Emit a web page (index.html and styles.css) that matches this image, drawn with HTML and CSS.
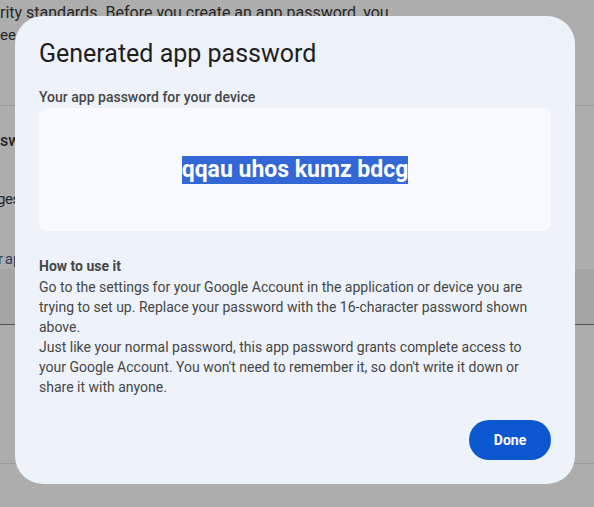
FILE: index.html
```html
<!DOCTYPE html>
<html lang="en">
<head>
<meta charset="utf-8">
<title>Generated app password</title>
<link rel="stylesheet" href="styles.css">
</head>
<body>
<div class="page">
  <div class="page-content">
    <p class="bg-line first">rity standards. Before you create an app password, you</p>
    <p class="bg-line second">ee</p>
    <div class="bg-rule top-rule"></div>
    <p class="bg-line heading">sw</p>
    <p class="bg-line third">ges</p>
    <p class="bg-line fourth">r <span class="bg-link">ap</span></p>
    <div class="bg-field"></div>
    <div class="bg-rule bottom-rule"></div>
  </div>

  <div class="dialog" role="dialog" aria-labelledby="dlg-title">
    <h1 id="dlg-title" class="dialog-title">Generated app password</h1>
    <p class="pw-label">Your app password for your device</p>
    <div class="pw-box">
      <span class="pw-value">qqau uhos kumz bdcg</span>
    </div>
    <div class="howto">
      <p class="howto-title">How to use it</p>
      <p class="howto-text">Go to the settings for your Google Account in the application or device you are trying to set up. Replace your password with the 16-character password shown above.</p>
      <p class="howto-text">Just like your normal password, this app password grants complete access to your Google Account. You won't need to remember it, so don't write it down or share it with anyone.</p>
    </div>
    <div class="actions">
      <button class="done-btn" type="button">Done</button>
    </div>
  </div>
</div>
</body>
</html>
```

FILE: styles.css
```css
* { box-sizing: border-box; }
html, body { margin: 0; padding: 0; }
body {
  width: 594px;
  height: 507px;
  overflow: hidden;
  font-family: Roboto, "Noto Sans", sans-serif;
}
.page {
  position: relative;
  width: 594px;
  height: 507px;
  background: #adadad;
  overflow: hidden;
}
.page-content {
  display: flex;
  flex-direction: column;
  color: #1a1a1a;
  font-size: 15px;
}
.bg-line { margin: 0; line-height: 22px; white-space: nowrap; }
.bg-line.first { margin-top: 2px; color: #262626; font-size: 16px; }
.bg-line.second { color: #262626; }
.bg-rule { height: 1px; background: #999; }
.top-rule { margin-top: 59px; }
.bg-line.heading { margin-top: 24px; font-weight: 500; font-size: 16px; color: #1f1f1f; }
.bg-line.third { margin-top: 36px; color: #262626; text-indent: -3px; letter-spacing: -0.5px; }
.bg-line.fourth { margin-top: 38px; color: #3a3a3a; text-indent: -2px; word-spacing: -2px; }
.bg-link { color: #2b3a5a; }
.bg-field { height: 56px; margin-top: -1px; background: #a5a5a5; border-bottom: 1px solid #555; }
.bottom-rule { margin-top: 138px; background: #9a9a9a; }

.dialog {
  position: absolute;
  left: 15px;
  top: 16px;
  width: 560px;
  height: 468px;
  background: #eef2fb;
  border-radius: 28px;
  padding: 22px 24px 24px;
  display: flex;
  flex-direction: column;
  color: #1f1f1f;
}
.dialog-title {
  margin: 0;
  font-weight: 400;
  font-size: 25px;
  line-height: 32px;
  color: #1f1f1f;
}
.pw-label {
  margin: 17px 0 0;
  font-size: 14px;
  font-weight: 500;
  line-height: 20px;
  color: #444746;
}
.pw-box {
  margin-top: 1px;
  height: 123px;
  background: #f8faff;
  border-radius: 8px;
  display: flex;
  align-items: center;
  justify-content: center;
}
.pw-value {
  font-size: 23px;
  font-weight: 700;
  line-height: 28px;
  color: #fff;
  background: #3367d6;
}
.howto { margin-top: 24px; }
.howto-title {
  margin: 0;
  font-size: 14px;
  font-weight: 700;
  line-height: 22px;
  color: #444746;
}
.howto-text {
  margin: 0;
  font-size: 14px;
  line-height: 20px;
  color: #444746;
}
.actions {
  margin-top: auto;
  display: flex;
  justify-content: flex-end;
}
.done-btn {
  width: 82px;
  height: 40px;
  border: 0;
  border-radius: 20px;
  background: #0b57d0;
  color: #fff;
  font-family: Roboto, sans-serif;
  font-size: 14px;
  font-weight: 700;
  cursor: pointer;
}
```
